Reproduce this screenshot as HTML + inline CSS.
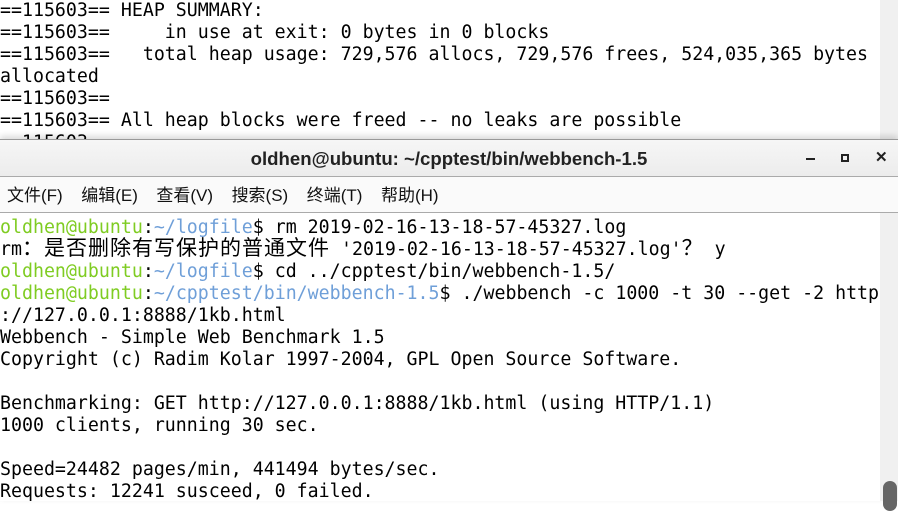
<!DOCTYPE html><html><head><meta charset="utf-8"><style>
body{margin:0;width:898px;height:500px;overflow:hidden;background:#fff;position:relative;}
pre{margin:0;font-family:"DejaVu Sans Mono","Noto Sans CJK SC",monospace;font-size:18.25px;line-height:22px;color:#000;white-space:pre;}
.c{font-family:"Noto Sans CJK SC",sans-serif;font-size:21px;letter-spacing:1px;line-height:10px}
#top{position:absolute;left:0;top:0px;}
.sb1{position:absolute;left:880px;top:0;width:18px;height:139px;background:#f0f0f0}
#win{position:absolute;left:0;top:139px;width:898px;height:361px;background:#fff;border-top:1px solid #999;box-shadow:0 -3px 6px rgba(0,0,0,.15)}
#title{height:36px;background:linear-gradient(#f6f6f6,#ececec);border-bottom:1px solid #aaa;font-family:"Liberation Sans",sans-serif;font-weight:bold;font-size:18.6px;line-height:38px;text-align:center;color:#222;position:relative}
#menu{height:35px;background:#fafafa;border-bottom:1px solid #aaa;font-family:"Liberation Sans","Noto Sans CJK SC",sans-serif;font-size:17px;line-height:38px;color:#111}
#menu span{margin-left:7px;margin-right:11.5px}
#term{position:absolute;left:0;top:77px}
.g{color:#7fcc22}.b{color:#6f9fd8}
.sb2{position:absolute;left:880px;top:73px;width:18px;height:288px;background:#f0f0f0}
.thumb{position:absolute;left:883px;top:481px;width:14px;height:30px;border-radius:7px;background:#666}
</style></head><body>
<pre id="top">==115603== HEAP SUMMARY:
==115603==     in use at exit: 0 bytes in 0 blocks
==115603==   total heap usage: 729,576 allocs, 729,576 frees, 524,035,365 bytes
allocated
==115603==
==115603== All heap blocks were freed -- no leaks are possible
==115603==</pre>
<div class="sb1"></div>
<div id="win">
<div id="title">oldhen@ubuntu: ~/cpptest/bin/webbench-1.5
<div style="position:absolute;left:806px;top:18px;width:9px;height:2px;background:#222"></div>
<div style="position:absolute;left:841px;top:14px;width:4px;height:4px;border:2px solid #222"></div>
<div style="position:absolute;left:875px;top:6px;font-size:15px;line-height:24px">✕</div>
</div>
<div id="menu"><span>文件(F)</span><span>编辑(E)</span><span>查看(V)</span><span>搜索(S)</span><span>终端(T)</span><span>帮助(H)</span></div>
<pre id="term"><span class="g">oldhen@ubuntu</span>:<span class="b">~/logfile</span>$ rm 2019-02-16-13-18-57-45327.log
rm<span class="c">：是否删除有写保护的普通文件</span> '2019-02-16-13-18-57-45327.log'<span class="c">？</span> y
<span class="g">oldhen@ubuntu</span>:<span class="b">~/logfile</span>$ cd ../cpptest/bin/webbench-1.5/
<span class="g">oldhen@ubuntu</span>:<span class="b">~/cpptest/bin/webbench-1.5</span>$ ./webbench -c 1000 -t 30 --get -2 http
://127.0.0.1:8888/1kb.html
Webbench - Simple Web Benchmark 1.5
Copyright (c) Radim Kolar 1997-2004, GPL Open Source Software.

Benchmarking: GET http://127.0.0.1:8888/1kb.html (using HTTP/1.1)
1000 clients, running 30 sec.

Speed=24482 pages/min, 441494 bytes/sec.
Requests: 12241 susceed, 0 failed.</pre>
<div class="sb2"></div>
</div>
<div class="thumb"></div>
</body></html>
